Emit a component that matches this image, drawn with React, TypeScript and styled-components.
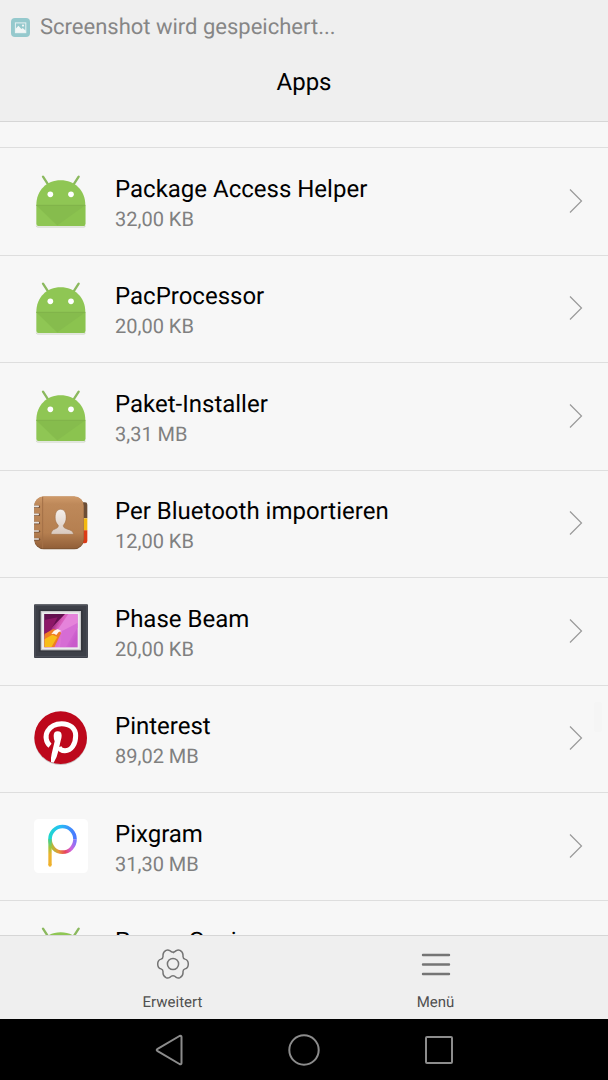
import React from "react";
import styled, { createGlobalStyle } from "styled-components";

const GlobalStyle = createGlobalStyle`
  * { box-sizing: border-box; }
  body {
    margin: 0;
    background: #f7f7f7;
    font-family: Roboto, "Noto Sans", sans-serif;
    text-rendering: geometricPrecision;
    color: #000;
  }
  button {
    margin: 0;
    padding: 0;
    border: 0;
    background: none;
    font: inherit;
    color: inherit;
    text-rendering: inherit;
    cursor: pointer;
  }
  svg { display: block; flex: none; }
`;

const Screen = styled.div`
  display: flex;
  flex-direction: column;
  height: 100vh;
  overflow: hidden;
`;

const Header = styled.header`
  flex: none;
  background: #efefef;
  border-bottom: 1px solid #d6d6d6;
`;

const StatusBar = styled.div`
  display: flex;
  align-items: center;
  gap: 10px;
  height: 56px;
  padding-left: 10px;
  font-size: 22px;
  line-height: 28px;
  color: #868686;
`;

const Title = styled.h1`
  margin: 0;
  padding: 12px 0 25px;
  text-align: center;
  font-size: 24px;
  line-height: 28px;
  font-weight: 400;
`;

const ListArea = styled.main`
  position: relative;
  flex: 1;
  min-height: 0;
  overflow: hidden;
`;

const AppList = styled.ul`
  margin: 0;
  padding: 25px 0 0;
  list-style: none;
`;

const AppItem = styled.li`
  height: 108px;
  border-top: 1px solid #dedede;
  &:nth-child(even) { height: 107px; }
`;

const AppButton = styled.button`
  display: flex;
  align-items: center;
  width: 100%;
  height: 100%;
  padding: 0 24px 2px 34px;
  text-align: left;
`;

const AppText = styled.span`
  flex: 1;
  min-width: 0;
  padding: 6px 0 0 27px;
`;

const AppName = styled.span`
  display: block;
  font-size: 24px;
  line-height: 30px;
`;

const AppSize = styled.span`
  display: block;
  font-size: 20px;
  line-height: 30px;
  color: #808080;
`;

const ScrollThumb = styled.div`
  position: absolute;
  top: 580px;
  right: 6px;
  width: 8px;
  height: 30px;
  border-radius: 2px;
  background: #f5f5f5;
`;

const Toolbar = styled.div`
  flex: none;
  display: flex;
  height: 84px;
  padding: 0 41px;
  background: #efefef;
  border-top: 1px solid #d6d6d6;
`;

const ToolButton = styled.button`
  flex: 1;
  display: flex;
  flex-direction: column;
  align-items: center;
  gap: 12px;
  padding-top: 12px;
  font-size: 15px;
  line-height: 20px;
  color: #505050;
`;

const NavBar = styled.nav`
  flex: none;
  display: flex;
  height: 61px;
  padding: 0 101px;
  background: #000;
`;

const NavButton = styled.button`
  flex: 1;
  display: flex;
  align-items: center;
  justify-content: center;
`;

const PictureBadge = () => (
  <svg width="20" height="20" viewBox="0 0 20 20" aria-hidden="true">
    <rect x="1" y="0" width="19" height="19" rx="4" fill="#95c9cd" />
    <rect x="5.4" y="4.9" width="10.4" height="9.8" fill="none" stroke="#e6f1f2" strokeWidth="1" />
    <path d="M5.4 14.7V11l3-3.2 3 3.1 1.3-1 3.1 2.8v2z" fill="#f1f6f6" />
    <circle cx="13" cy="7.6" r="1.1" fill="#f1f6f6" />
  </svg>
);

const AndroidIcon = () => (
  <svg width="54" height="54" viewBox="42 27 162 162" aria-hidden="true">
    <path d="M49 182q0 4 4 4h139q4 0 4-4" fill="none" stroke="#b9c4ae" strokeWidth="2" />
    <path d="M69 35l15 23M176 35l-15 23" stroke="#8bb95e" strokeWidth="7" strokeLinecap="round" />
    <path d="M49 121C49 76 80 46 122 46s74 30 74 75v56q0 6-6 6H55q-6 0-6-6z" fill="#8fc654" />
    <path d="M49 121h147v56q0 6-6 6H112z" fill="#8bc34f" />
    <path d="M49 121h147l-84 60z" fill="#86bc4d" />
    <path d="M49 121h147" stroke="#7cab4a" strokeWidth="2" />
    <circle cx="91" cy="88" r="8.5" fill="#fff" />
    <circle cx="153" cy="88" r="8.5" fill="#fff" />
  </svg>
);

const ContactsIcon = () => (
  <svg width="54" height="54" viewBox="42 36 162 162" aria-hidden="true">
    <defs>
      <linearGradient id="leather" x1="0" y1="0" x2="0" y2="1">
        <stop offset="0" stopColor="#cf9a6a" />
        <stop offset="0.15" stopColor="#be895a" />
        <stop offset="0.7" stopColor="#b57f50" />
        <stop offset="1" stopColor="#925f38" />
      </linearGradient>
      <linearGradient id="person" x1="0" y1="0" x2="0" y2="1">
        <stop offset="0" stopColor="#f4efeb" />
        <stop offset="1" stopColor="#d9c9be" />
      </linearGradient>
    </defs>
    <path d="M180 55h15q7 0 7 7v41h-22z" fill="#6b4d36" />
    <path d="M180 103h22v36h-22z" fill="#f3b80e" />
    <path d="M180 139h22v32q0 7-7 7h-15z" fill="#dc3b16" />
    <rect x="43" y="38" width="148" height="158" rx="28" fill="#7d5433" />
    <rect x="43" y="37" width="148" height="156" rx="28" fill="url(#leather)" />
    <path d="M68 38v155" stroke="#a37046" strokeWidth="3" />
    {[67, 91, 116, 141, 165].map((y) => (
      <g key={y}>
        <path d={`M43 ${y + 1}h14`} stroke="#6d4a30" strokeWidth="7" strokeLinecap="round" />
        <path d={`M43 ${y}h12`} stroke="#e7e2de" strokeWidth="5" strokeLinecap="round" />
      </g>
    ))}
    <path
      d="M93 151c1-9 4-13 12-16 7-3 10-4 10-11-6-6-8-11-9-18-2-18 4-30 16-30s18 12 16 30c-1 7-3 12-8 18 0 7 3 8 11 11 9 3 19 6 20 16z"
      fill="url(#person)"
      stroke="#9b6a43"
      strokeWidth="1.5"
    />
  </svg>
);

const PhaseBeamIcon = () => (
  <svg width="54" height="54" viewBox="42 27 162 162" aria-hidden="true">
    <defs>
      <linearGradient id="beam" x1="0" y1="0.1" x2="1" y2="0.6">
        <stop offset="0" stopColor="#4a1049" />
        <stop offset="0.26" stopColor="#8d1868" />
        <stop offset="0.45" stopColor="#d75bb9" />
        <stop offset="0.7" stopColor="#de78d8" />
        <stop offset="1" stopColor="#c95acb" />
      </linearGradient>
      <clipPath id="canvas"><rect x="73" y="57" width="100" height="100" /></clipPath>
    </defs>
    <rect x="42" y="28" width="162" height="161" rx="3" fill="#3d4048" />
    <rect x="45" y="31" width="156" height="154" fill="none" stroke="#50535c" strokeWidth="3" />
    <rect x="56" y="44" width="132" height="126" fill="#33353c" />
    <rect x="62" y="48" width="121" height="118" fill="#c8c8ca" />
    <rect x="66" y="52" width="113" height="110" fill="#ececed" />
    <rect x="73" y="57" width="100" height="100" fill="url(#beam)" />
    <g clipPath="url(#canvas)">
      <path d="M73 57h62L97 96l-24 26z" fill="#64104f" />
      <path d="M73 75l40-8-20 37-20 14z" fill="#8d1767" />
      <path d="M73 117l27-15 25 8-22 47H73z" fill="#ef7d24" />
      <path d="M73 133l24-14 15 7-18 31H73z" fill="#f8bd18" />
      <path d="M173 57v27l-49 31-10-12 31-46z" fill="#e583da" />
      <path d="M126 108l-6 49h17l36-60V84z" fill="#d66cd4" />
      <path d="M94 117l8-10 11-5 11 6-8 3-7 9-7-4z" fill="#fff5ec" />
    </g>
  </svg>
);

const PinterestIcon = () => (
  <svg width="54" height="54" viewBox="42 31 162 162" aria-hidden="true">
    <circle cx="122" cy="114" r="79" fill="#c9c2c3" />
    <circle cx="122" cy="111" r="79" fill="#bd081c" />
    <path
      d="M90 135C77 125 75 104 83 91c9-15 24-22 42-22 25 0 42 14 42 36 0 26-13 45-32 45-9 0-16-4-18-11"
      fill="none"
      stroke="#fff"
      strokeWidth="15"
    />
    <path d="M101 105q0-13 12-13 12 0 12 13 0 5-3 15l-7 31q-4 20-14 35l-8-2q-1-12 2-25l9-37q-3-7-3-17z" fill="#fff" />
  </svg>
);

const PixgramIcon = () => (
  <svg width="54" height="54" viewBox="42 27 162 162" aria-hidden="true">
    <defs>
      <linearGradient id="pxTop" gradientUnits="userSpaceOnUse" x1="90" y1="88" x2="165" y2="88">
        <stop offset="0" stopColor="#20d6cf" />
        <stop offset="0.4" stopColor="#25bff5" />
        <stop offset="1" stopColor="#4a78ff" />
      </linearGradient>
      <linearGradient id="pxBottom" gradientUnits="userSpaceOnUse" x1="90" y1="110" x2="165" y2="88">
        <stop offset="0" stopColor="#9bc43c" />
        <stop offset="0.25" stopColor="#e79a36" />
        <stop offset="0.5" stopColor="#e8445a" />
        <stop offset="0.75" stopColor="#cf62dd" />
        <stop offset="1" stopColor="#7d77fb" />
      </linearGradient>
      <linearGradient id="pxStem" gradientUnits="userSpaceOnUse" x1="90" y1="88" x2="90" y2="170">
        <stop offset="0" stopColor="#2fd3a8" />
        <stop offset="0.3" stopColor="#a0c43a" />
        <stop offset="0.55" stopColor="#ecb32f" />
        <stop offset="1" stopColor="#efb02b" />
      </linearGradient>
    </defs>
    <rect x="42" y="27" width="162" height="162" rx="14" fill="#fff" />
    <path d="M90 88a37 38 0 0 1 75 0" fill="none" stroke="url(#pxTop)" strokeWidth="11" />
    <path d="M90 88a37 38 0 0 0 75 0" fill="none" stroke="url(#pxBottom)" strokeWidth="11" />
    <path d="M90 87v78" fill="none" stroke="url(#pxStem)" strokeWidth="10" />
    <circle cx="90" cy="165" r="5" fill="#efb02b" />
  </svg>
);

const Chevron = () => (
  <svg width="16" height="26" viewBox="0 0 16 26" fill="none" stroke="#999" strokeWidth="1.2" aria-hidden="true">
    <path d="M2 1.5L13.5 13 2 24.5" />
  </svg>
);

const GearIcon = () => (
  <svg width="34" height="32" viewBox="0 0 34 32" fill="none" stroke="#757575" strokeWidth="1.5" strokeLinejoin="round" aria-hidden="true">
    <path d="M17 5L20.300 2.600Q22 1.400 24 2.400Q27 4 27 7V8.400Q27 10.400 29 11.100Q32.300 12 32.300 16Q32.300 20 29 20.900Q27 21.600 27 23.600V25Q27 28 24 29.600Q22 30.600 20.300 29.400Q17 26 13.700 29.400Q12 30.600 10 29.600Q7 28 7 25V23.600Q7 21.600 5 20.900Q1.700 20 1.700 16Q1.700 12 5 11.100Q7 10.400 7 8.400V7Q7 4 10 2.400Q12 1.400 13.700 2.600Q17 6 20.300 2.600" />
    <circle cx="17" cy="16" r="5.600" />
  </svg>
);

const MenuIcon = () => (
  <svg width="34" height="32" viewBox="0 0 34 32" stroke="#757575" strokeWidth="2.4" strokeLinecap="round" aria-hidden="true">
    <path d="M4 7h26M4 16.500h26M4 26h26" />
  </svg>
);

const BackIcon = () => (
  <svg width="32" height="34" viewBox="0 0 32 34" fill="none" stroke="#8c8c8c" strokeWidth="2" strokeLinejoin="round" aria-hidden="true">
    <path d="M4.200 16.200Q3.200 17 4.200 17.800L26.500 31Q28.500 31.800 28.500 30V4Q28.500 2.200 26.500 3Z" />
  </svg>
);

const HomeIcon = () => (
  <svg width="34" height="34" viewBox="0 0 34 34" fill="none" stroke="#8c8c8c" strokeWidth="2" aria-hidden="true">
    <circle cx="17" cy="17" r="14.700" />
  </svg>
);

const RecentIcon = () => (
  <svg width="34" height="34" viewBox="0 0 34 34" fill="none" stroke="#8c8c8c" strokeWidth="2" aria-hidden="true">
    <rect x="4" y="4" width="26" height="26" rx="1" />
  </svg>
);

type AppEntry = { name: string; size: string; Icon: React.ComponentType };

const apps: AppEntry[] = [
  { name: "Package Access Helper", size: "32,00 KB", Icon: AndroidIcon },
  { name: "PacProcessor", size: "20,00 KB", Icon: AndroidIcon },
  { name: "Paket-Installer", size: "3,31 MB", Icon: AndroidIcon },
  { name: "Per Bluetooth importieren", size: "12,00 KB", Icon: ContactsIcon },
  { name: "Phase Beam", size: "20,00 KB", Icon: PhaseBeamIcon },
  { name: "Pinterest", size: "89,02 MB", Icon: PinterestIcon },
  { name: "Pixgram", size: "31,30 MB", Icon: PixgramIcon },
  { name: "Power Genie", size: "", Icon: AndroidIcon },
];

export default function App() {
  return (
    <Screen>
      <GlobalStyle />
      <Header>
        <StatusBar>
          <PictureBadge />
          Screenshot wird gespeichert...
        </StatusBar>
        <Title>Apps</Title>
      </Header>
      <ListArea>
        <AppList>
          {apps.map(({ name, size, Icon }) => (
            <AppItem key={name}>
              <AppButton type="button">
                <Icon />
                <AppText>
                  <AppName>{name}</AppName>
                  <AppSize>{size || "\u00a0"}</AppSize>
                </AppText>
                <Chevron />
              </AppButton>
            </AppItem>
          ))}
        </AppList>
        <ScrollThumb />
      </ListArea>
      <Toolbar>
        <ToolButton type="button">
          <GearIcon />
          Erweitert
        </ToolButton>
        <ToolButton type="button">
          <MenuIcon />
          Menü
        </ToolButton>
      </Toolbar>
      <NavBar>
        <NavButton type="button" aria-label="Zurück"><BackIcon /></NavButton>
        <NavButton type="button" aria-label="Startseite"><HomeIcon /></NavButton>
        <NavButton type="button" aria-label="Letzte Apps"><RecentIcon /></NavButton>
      </NavBar>
    </Screen>
  );
}
